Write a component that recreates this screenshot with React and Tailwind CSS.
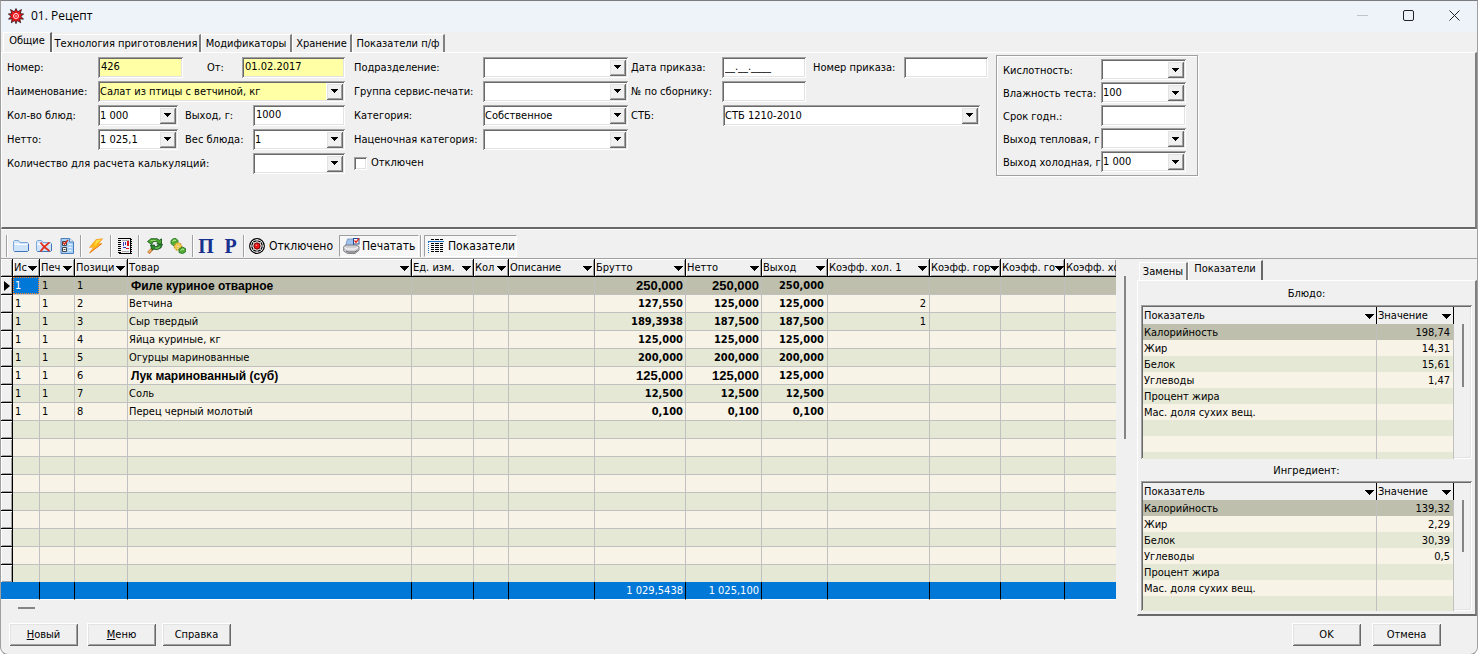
import React, { useState } from 'react';

const MAIN_TABS = [
  { name: 'Общие', width: 'w-[49px]' },
  { name: 'Технология приготовления', width: 'w-[149px]' },
  { name: 'Модификаторы', width: 'w-[91px]' },
  { name: 'Хранение', width: 'w-[60px]' },
  { name: 'Показатели п/ф', width: 'w-[93px]' },
];

const SIDE_TABS = [
  { name: 'Замены', width: 'w-[49px]' },
  { name: 'Показатели', width: 'w-[75px]' },
];

const COLUMNS = [
  { title: '', width: 'w-[12px]' },
  { title: 'Ис', width: 'w-[27px]' },
  { title: 'Печ', width: 'w-[35px]' },
  { title: 'Позици', width: 'w-[53px]' },
  { title: 'Товар', width: '' },
  { title: 'Ед. изм.', width: 'w-[62px]' },
  { title: 'Кол', width: 'w-[35px]' },
  { title: 'Описание', width: 'w-[86px]' },
  { title: 'Брутто', width: 'w-[91px]' },
  { title: 'Нетто', width: 'w-[76px]' },
  { title: 'Выход', width: 'w-[66px]' },
  { title: 'Коэфф. хол. 1', width: 'w-[102px]' },
  { title: 'Коэфф. гор', width: 'w-[71px]' },
  { title: 'Коэфф. го', width: 'w-[64px]' },
  { title: 'Коэфф. хо', width: 'w-[51px]', noArrow: true },
];

const ITEMS = [
  { name: 'Филе куриное отварное', gross: '250,000', net: '250,000', out: '250,000', strong: true },
  { name: 'Ветчина', gross: '127,550', net: '125,000', out: '125,000', cold: '2' },
  { name: 'Сыр твердый', gross: '189,3938', net: '187,500', out: '187,500', cold: '1' },
  { name: 'Яйца куриные, кг', gross: '125,000', net: '125,000', out: '125,000' },
  { name: 'Огурцы маринованные', gross: '200,000', net: '200,000', out: '200,000' },
  { name: 'Лук маринованный (суб)', gross: '125,000', net: '125,000', out: '125,000', strong: true },
  { name: 'Соль', gross: '12,500', net: '12,500', out: '12,500' },
  { name: 'Перец черный молотый', gross: '0,100', net: '0,100', out: '0,100' },
];

const ROW_COUNT = 17;

const DISH = [
  ['Калорийность', '198,74'],
  ['Жир', '14,31'],
  ['Белок', '15,61'],
  ['Углеводы', '1,47'],
  ['Процент жира', ''],
  ['Мас. доля сухих вещ.', ''],
  ['', ''],
  ['', ''],
  ['', ''],
];

const INGREDIENT = [
  ['Калорийность', '139,32'],
  ['Жир', '2,29'],
  ['Белок', '30,39'],
  ['Углеводы', '0,5'],
  ['Процент жира', ''],
  ['Мас. доля сухих вещ.', ''],
  ['', ''],
];

const SUNKEN = 'shadow-[inset_1px_1px_0_#a0a0a0,inset_-1px_-1px_0_#ffffff,inset_2px_2px_0_#696969,inset_-2px_-2px_0_#e3e3e3]';
const RAISED = 'shadow-[inset_1px_1px_0_#ffffff,inset_-1px_-1px_0_#696969,inset_2px_2px_0_#e3e3e3,inset_-2px_-2px_0_#a0a0a0]';

const Arrow = () => (
  <svg className="shrink-0" width="9" height="5" viewBox="0 0 9 5" shapeRendering="crispEdges">
    <path d="M0 0h9L4.5 5z" fill="#000" />
  </svg>
);

const TextBox = ({ id, value = '', width, yellow }) => (
  <input
    id={id}
    type="text"
    defaultValue={value}
    className={`h-[21px] shrink-0 px-[3px] pb-px outline-none ${width} ${SUNKEN} ${yellow ? 'bg-[#ffffa6]' : 'bg-white'}`}
  />
);

const Combo = ({ id, value = '', width, yellow }) => (
  <div className={`relative h-[21px] shrink-0 ${width} ${SUNKEN} ${yellow ? 'bg-[#ffffa6]' : 'bg-white'}`}>
    <select id={id} defaultValue={value} className="h-full w-full appearance-none bg-transparent pl-[2px] pr-5 pt-px outline-none">
      <option value={value}>{value}</option>
    </select>
    <span className={`pointer-events-none absolute right-[2px] top-[2px] flex h-[17px] w-[17px] items-center justify-center bg-[#f0f0f0] ${RAISED}`}>
      <svg width="7" height="4" viewBox="0 0 7 4" shapeRendering="crispEdges">
        <path d="M0 0h7L3.5 4z" fill="#000" />
      </svg>
    </span>
  </div>
);

const Label = ({ htmlFor, width, children }) => (
  <label htmlFor={htmlFor} className={`shrink-0 whitespace-nowrap pt-[2px] ${width}`}>
    {children}
  </label>
);

const Row = ({ children }) => <div className="flex h-6 items-center">{children}</div>;

const Tabs = ({ tabs, active, onSelect }) => (
  <div role="tablist" className="flex h-5 items-end">
    {tabs.map((tab) => (
      <button
        key={tab.name}
        role="tab"
        aria-selected={tab.name === active}
        onClick={() => onSelect(tab.name)}
        className={`shrink-0 whitespace-nowrap border-l border-t border-l-white border-t-white text-center ${tab.width} ${
          tab.name === active
            ? 'h-5 border-r-2 border-r-[#696969] pb-[3px]'
            : 'h-[18px] border-r-2 border-r-[#808080]'
        }`}
      >
        {tab.name}
      </button>
    ))}
  </div>
);

const AppIcon = () => (
  <svg width="16" height="16" viewBox="0 0 16 16">
    <path d="M8 .5l1.700 3.300L13.500 1.500l-1.300 4L15.700 6l-2.900 2.200 2.700 3-3.700-.4.900 4-3.600-2.300L8 15.700l-1.300-3.200-3.400 2.300.8-4-3.600.4 2.700-3L.3 6l3.500-.5-1.300-4 3.800 2.300z" fill="#f0151b" stroke="#111" strokeWidth=".7" />
    <circle cx="8" cy="8" r="2.500" fill="none" stroke="#fff" strokeWidth=".9" />
    <circle cx="8" cy="8" r=".8" fill="#fff" />
  </svg>
);

const FolderIcon = ({ crossed }) => (
  <svg width="16" height="16" viewBox="0 0 16 16">
    <path d="M.5 12.500v-9l1-1h4l1.500 2h7.500l1 1v7l-1 1h-13z" fill="#cfe3fa" stroke="#7ba7dc" />
    <path d="M1.500 6.500h13" stroke="#fff" />
    <path d="M1.500 5.500h5" stroke="#eaf4ff" />
    <path d="M1.500 13.500h13M15.500 6v7" stroke="#3f76bb" fill="none" />
    {crossed && (
      <>
        <path d="M4.500 4.500c2 3 5 6 9 8.500M13.500 4.500c-4 2.500-6.500 5-9 9" fill="none" stroke="#e0301e" strokeWidth="1.800" />
      </>
    )}
  </svg>
);

const ChecklistIcon = () => (
  <svg width="16" height="16" viewBox="0 0 16 16">
    <path d="M2 .5h8.500L14.500 4v11.500H2z" fill="#a9d0f6" stroke="#4a7fbf" />
    <path d="M10.500.5V4h4" fill="#e9f4ff" stroke="#4a7fbf" />
    <path d="M3.500 3.500h4v4h-4zM3.500 9.500h4v4h-4z" fill="#fff" stroke="#444" />
    <path d="M4 4.500l1.500 1.500L9 2" fill="none" stroke="#d8301f" strokeWidth="1.600" />
    <path d="M4.500 11.500h2" stroke="#444" />
    <path d="M9.500 6.500h3M9.500 9.500h3M9.500 12.500h3" stroke="#eef7ff" />
  </svg>
);

const LightningIcon = () => (
  <svg width="16" height="16" viewBox="0 0 16 16">
    <path d="M8 1.500L14.500.8l-4 5 3.500-.3L1.500 15l4.300-6-4.300.5z" fill="#ffb914" stroke="#f59a2e" strokeWidth=".7" />
    <path d="M8.500 2.300l4.500-.5L6 8z" fill="#ffe04a" />
    <path d="M13.500 5.800L2 14.700" stroke="#ea6f1a" strokeWidth=".9" />
  </svg>
);

const NotebookIcon = () => (
  <svg width="16" height="16" viewBox="0 0 16 16" shapeRendering="crispEdges">
    <rect x="3" y="1" width="10" height="13" fill="#f4f4f8" />
    <path d="M2 .5h12M2 15.500h12" stroke="#000" />
    <path d="M2.500 0v16" stroke="#000" strokeWidth="3" strokeDasharray="1 1" />
    <path d="M13.500 0v16" stroke="#000" strokeWidth="1" />
    <path d="M14.500 1v15" stroke="#000" strokeDasharray="1 1" />
    <path d="M6 4h1v4H6zM6 9h3v1H6zM8 4h1v3H8z" fill="#3a3ab0" />
    <path d="M10 3h2v5h-2zM9 10h3v1H9z" fill="#e01818" />
    <path d="M5 13.500h7M5 2.500h7" stroke="#aaa" />
  </svg>
);

const RefreshToolIcon = () => (
  <svg width="16" height="16" viewBox="0 0 16 16">
    <path d="M7 9l-5.700 6" stroke="#b8651c" strokeWidth="3" />
    <path d="M6.500 9.500L1.500 14.500" stroke="#ffc37a" strokeWidth="1.200" />
    <path d="M.5 3.500L4 .7h6l2.500 1.500L14.500.8v5l-4.700.2 1.200-1.500-1.800-1H6.500L4.500 6.500z" fill="#49a82c" stroke="#124a18" strokeWidth=".8" />
    <path d="M3.500 7h4.300L7 8l2 .8 2.500-2.300 4-.2-1.500 3.500-3.500 1.800-4-.4-1.500.8z" fill="#2b8a2a" stroke="#124a18" strokeWidth=".8" />
    <path d="M3.500 2.500h5.500M8 10h3l2-1.500" fill="none" stroke="#a5e27d" strokeWidth=".8" />
  </svg>
);

const GearsIcon = () => (
  <svg width="16" height="16" viewBox="0 0 16 16">
    <path d="M1 2.500L3.500.5H6l2 2v3L6 8 3 7.500 1 5.500z" fill="#52ad35" stroke="#256d22" strokeWidth=".8" />
    <path d="M2.500 4l1.500-2 2 .5" fill="none" stroke="#bff09a" />
    <circle cx="8" cy="8.500" r="3.600" fill="#f6d257" stroke="#c99a26" strokeWidth="1.400" strokeDasharray="2 1" />
    <circle cx="8" cy="8.500" r="1.200" fill="#fff7d0" stroke="#c99a26" strokeWidth=".6" />
    <path d="M9 11l3.500-2 3 1.500V14l-3 1.700L9 14.500z" fill="#52ad35" stroke="#256d22" strokeWidth=".8" />
    <path d="M10.500 12.500l2-1.500 1.500.7" fill="none" stroke="#bff09a" />
  </svg>
);

const TargetIcon = () => (
  <svg width="16" height="16" viewBox="0 0 16 16">
    <circle cx="8" cy="8" r="7.300" fill="#fff" stroke="#000" strokeWidth="1.300" />
    <circle cx="8" cy="8" r="5.200" fill="none" stroke="#000" strokeWidth="1.300" />
    <circle cx="8" cy="8" r="3.200" fill="#f01414" stroke="#500" strokeWidth=".9" />
    <path d="M8 1v3M8 12v3M1 8h3M12 8h3M3 3l2 2M13 3l-2 2M3 13l2-2M13 13l-2-2" stroke="#fff" strokeWidth=".7" />
    <circle cx="7.300" cy="7.300" r=".8" fill="#ff9a9a" />
  </svg>
);

const PrinterIcon = () => (
  <svg width="17" height="16" viewBox="0 0 17 16">
    <path d="M4.500 1h7l-1 7h-8z" fill="#9fc2f0" stroke="#6f8fbc" strokeWidth=".8" />
    <path d="M.7 8.500L3 7h9.500l3.500 1.500v3.700L12 15.500H4.500L.7 13z" fill="#cfcfd3" stroke="#6c6c72" strokeWidth=".8" />
    <path d="M1.500 9.500L4.500 11h7.500l3-2" fill="none" stroke="#fff" />
    <path d="M3 13l2 1h7l2.500-1.800" stroke="#5c5c62" fill="none" />
    <rect x="10.500" y=".5" width="5.500" height="5.500" fill="#fff" stroke="#27488c" />
    <path d="M11.500 2.500L13 4.500 16 .5" fill="none" stroke="#e02a1a" strokeWidth="1.300" />
  </svg>
);

const ListIcon = () => (
  <svg width="16" height="15" viewBox="0 0 16 15" shapeRendering="crispEdges">
    <path d="M0 3.500h16" stroke="#1d6fc4" />
    <path d="M.5 4v11" stroke="#1d6fc4" strokeDasharray="1 1" />
    <path d="M3 1.500h3M7 1.500h4M12 1.500h3M3 5.500h3M7 5.500h4M12 5.500h3M3 7.500h3M7 7.500h4M12 7.500h3M3 9.500h3M7 9.500h4M12 9.500h3M3 11.500h3M7 11.500h4M12 11.500h3M3 13.500h3M7 13.500h4M12 13.500h3" stroke="#000" />
  </svg>
);

const Separator = () => <span className="h-[22px] w-[2px] shrink-0 border-l border-r border-l-[#a0a0a0] border-r-white" />;

const ToolButton = ({ label, width = 'w-[23px]', children }) => (
  <button aria-label={label} className={`flex h-[22px] shrink-0 items-center justify-center ${width}`}>
    {children}
  </button>
);

const Toolbar = () => (
  <div className="flex h-[30px] items-center border-b border-t border-b-[#a0a0a0] border-t-white pl-[5px] pt-[3px] text-[12px]">
    <Separator />
    <span className="w-px" />
    <ToolButton label="Открыть"><FolderIcon /></ToolButton>
    <ToolButton label="Удалить"><FolderIcon crossed /></ToolButton>
    <ToolButton label="Список"><ChecklistIcon /></ToolButton>
    <span className="w-[2px]" />
    <Separator />
    <ToolButton label="Пересчитать" width="w-[28px]"><LightningIcon /></ToolButton>
    <Separator />
    <ToolButton label="Журнал" width="w-[26px]"><NotebookIcon /></ToolButton>
    <Separator />
    <span className="w-[3px]" />
    <ToolButton label="Обновить"><RefreshToolIcon /></ToolButton>
    <ToolButton label="Настройки"><GearsIcon /></ToolButton>
    <span className="w-[3px]" />
    <Separator />
    <ToolButton label="Приход" width="w-[24px]">
      <span className="font-['Liberation_Serif',serif] text-[20px] font-bold leading-5 text-[#17318f]">П</span>
    </ToolButton>
    <ToolButton label="Расход" width="w-[25px]">
      <span className="font-['Liberation_Serif',serif] text-[20px] font-bold leading-5 text-[#17318f]">Р</span>
    </ToolButton>
    <Separator />
    <button className="flex h-[22px] w-[94px] shrink-0 items-center gap-1 whitespace-nowrap pl-1">
      <TargetIcon />
      Отключено
    </button>
    <button className="flex h-[22px] w-[80px] shrink-0 items-center gap-[2px] whitespace-nowrap border border-b-white border-l-[#a0a0a0] border-r-white border-t-[#a0a0a0] bg-[#f7f7f7] pl-[3px]">
      <PrinterIcon />
      Печатать
    </button>
    <span className="w-[1px]" />
    <Separator />
    <span className="w-[2px]" />
    <button className="flex h-[22px] w-[93px] shrink-0 items-center gap-1 whitespace-nowrap border border-b-white border-l-[#a0a0a0] border-r-white border-t-[#a0a0a0] bg-[#f7f7f7] pl-[3px]">
      <ListIcon />
      Показатели
    </button>
  </div>
);

const ItemsTable = () => (
  <table className="w-full table-fixed border-separate border-spacing-0">
    <colgroup>
      {COLUMNS.map((col, i) => (
        <col key={i} className={col.width} />
      ))}
    </colgroup>
    <thead>
      <tr>
        {COLUMNS.map((col, i) => (
          <th
            key={i}
            className="h-[18px] overflow-hidden border-b border-r border-black bg-[#f0f0f0] p-0 text-left font-normal shadow-[inset_1px_1px_0_#ffffff,inset_-1px_-1px_0_#a0a0a0] last:border-r-0"
          >
            {col.title && (
              <div className="flex h-[17px] items-center justify-between pl-px pr-[2px] pt-px">
                <span className="whitespace-nowrap">{col.title}</span>
                {!col.noArrow && <Arrow />}
              </div>
            )}
          </th>
        ))}
      </tr>
    </thead>
    <tbody>
      {Array.from({ length: ROW_COUNT }, (_, i) => {
        const item = ITEMS[i] || {};
        const last = i === ROW_COUNT - 1;
        const bg = i === 0 ? 'bg-[#bfbfad]' : i % 2 ? 'bg-[#f7f3e7]' : 'bg-[#e6e8d6]';
        const cell = `overflow-hidden whitespace-nowrap border-r border-[#c0c0c0] p-0 pt-px leading-4 ${bg} ${last ? 'h-[17px]' : 'h-[18px] border-b'}`;
        const strong = item.strong ? "font-['Liberation_Sans',sans-serif] text-[13px]" : '';
        return (
          <tr key={i}>
            <td className={`border-r border-black bg-[#f0f0f0] p-0 shadow-[inset_1px_1px_0_#ffffff,inset_-1px_-1px_0_#a0a0a0] ${last ? '' : 'border-b'}`}>
              {i === 0 && (
                <svg className="ml-[3px]" width="6" height="10" viewBox="0 0 6 10">
                  <path d="M0 0l6 5-6 5z" fill="#000" />
                </svg>
              )}
            </td>
            {i === 0 ? (
              <td className="border-b border-r border-[#c0c0c0] bg-[#bfbfad] p-0">
                <div className="h-[17px] border border-dotted border-[#ff8728] bg-[#0078d7] pl-px leading-4 text-white">1</div>
              </td>
            ) : (
              <td className={`${cell} pl-[2px]`}>{item.name && '1'}</td>
            )}
            <td className={`${cell} pl-[2px]`}>{item.name && '1'}</td>
            <td className={`${cell} pl-[2px]`}>{item.name && i + 1}</td>
            <td className={`${cell} ${item.strong ? "pl-[3px] font-['Liberation_Sans',sans-serif] text-[12px] font-bold" : 'pl-px'}`}>
              {item.name}
            </td>
            <td className={cell} />
            <td className={cell} />
            <td className={cell} />
            <td className={`${cell} pr-[2px] text-right font-bold ${strong}`}>{item.gross}</td>
            <td className={`${cell} pr-[2px] text-right font-bold ${strong}`}>{item.net}</td>
            <td className={`${cell} pr-[3px] text-right font-bold`}>{item.out}</td>
            <td className={`${cell} pr-[3px] text-right`}>{item.cold}</td>
            <td className={cell} />
            <td className={cell} />
            <td className={`${cell} border-r-0`} />
          </tr>
        );
      })}
    </tbody>
    <tfoot>
      <tr className="bg-[#0078d7] text-white">
        {COLUMNS.map((col, i) => (
          <td
            key={i}
            className={`h-[18px] whitespace-nowrap border-b border-b-white p-0 pr-[2px] pt-px text-right leading-4 last:border-r-0 ${i === 0 ? '' : 'border-r border-r-black'}`}
          >
            {col.title === 'Брутто' && '1 029,5438'}
            {col.title === 'Нетто' && '1 025,100'}
          </td>
        ))}
      </tr>
    </tfoot>
  </table>
);

const ValuesGrid = ({ rows, height, thumb }) => (
  <div className={`flex overflow-hidden p-[2px] ${SUNKEN} ${height}`}>
    <table className="w-full flex-1 table-fixed self-start border-separate border-spacing-0">
      <colgroup>
        <col />
        <col className="w-[77px]" />
      </colgroup>
      <thead>
        <tr>
          {['Показатель', 'Значение'].map((title) => (
            <th key={title} className="h-[17px] border-r border-black bg-[#f0f0f0] p-0 text-left font-normal">
              <div className="flex items-center justify-between pl-px pr-[2px] pt-px leading-4">
                {title}
                <Arrow />
              </div>
            </th>
          ))}
        </tr>
      </thead>
      <tbody>
        {rows.map(([name, value], i) => {
          const bg = i === 0 ? 'bg-[#bfbfad]' : i % 2 ? 'bg-[#f7f3e7]' : 'bg-[#e6e8d6]';
          return (
            <tr key={i} className={bg}>
              <td className="h-4 border-r border-[#c0c0c0] p-0 pl-px pt-[2px] leading-[14px]">{name}</td>
              <td className="h-4 border-r border-[#c0c0c0] p-0 pr-[3px] pt-[2px] text-right leading-[14px]">{value}</td>
            </tr>
          );
        })}
      </tbody>
    </table>
    <div className="w-[16px] shrink-0 pl-[8px] pt-[17px]">
      <div className={`w-[2px] bg-[#858585] ${thumb}`} />
    </div>
  </div>
);

const PushButton = ({ children }) => (
  <button className={`h-[23px] w-[69px] bg-[#f0f0f0] ${RAISED}`}>{children}</button>
);

const App = () => {
  const [mainTab, setMainTab] = useState('Общие');
  const [sideTab, setSideTab] = useState('Показатели');

  return (
    <div className="flex min-h-screen w-full flex-col overflow-hidden rounded-b-lg border border-b-[#8a8a8a] border-l-[#a0a0a0] border-r-[#a0a0a0] border-t-[#7d7d80] bg-[#f0f0f0] font-['DejaVu_Sans_Condensed','DejaVu_Sans',sans-serif] text-[11px] leading-[14px] text-black">
      {/* Title bar */}
      <header className="flex h-[31px] shrink-0 items-center bg-[#eef3fa] pb-[2px] pl-[7px]">
        <AppIcon />
        <h1 className="flex-1 pl-[7px] font-['Open_Sans',sans-serif] text-[12px]">01. Рецепт</h1>
        <button aria-label="Свернуть" className="flex h-full w-[46px] items-center justify-center">
          <span className="h-px w-[11px] bg-[#c0c4ca]" />
        </button>
        <button aria-label="Развернуть" className="flex h-full w-[46px] items-center justify-center">
          <span className="h-[11px] w-[11px] rounded-[2px] border border-[#222]" />
        </button>
        <button aria-label="Закрыть" className="flex h-full w-[46px] items-center justify-center">
          <svg width="11" height="11" viewBox="0 0 11 11">
            <path d="M.5.5l10 10M10.500.5l-10 10" stroke="#222" />
          </svg>
        </button>
      </header>

      {/* Recipe form */}
      <div className="pl-[2px]">
        <Tabs tabs={MAIN_TABS} active={mainTab} onSelect={setMainTab} />
      </div>
      <form className="flex h-[177px] items-start border-b-2 border-l border-r-2 border-t border-b-[#696969] border-l-white border-r-[#808080] border-t-white pl-[5px] pt-[2px]">
        <div className="w-[347px] shrink-0">
          <Row>
            <Label htmlFor="number" width="w-[91px]">Номер:</Label>
            <TextBox id="number" value="426" width="w-[85px]" yellow />
            <span className="w-[24px]" />
            <Label htmlFor="from" width="w-[35px]">От:</Label>
            <TextBox id="from" value="01.02.2017" width="w-[103px]" yellow />
          </Row>
          <Row>
            <Label htmlFor="name" width="w-[91px]">Наименование:</Label>
            <Combo id="name" value="Салат из птицы с ветчиной, кг" width="w-[247px]" yellow />
          </Row>
          <Row>
            <Label htmlFor="count" width="w-[91px]">Кол-во блюд:</Label>
            <Combo id="count" value="1 000" width="w-[80px]" />
            <span className="w-[7px]" />
            <Label htmlFor="output" width="w-[68px]">Выход, г:</Label>
            <TextBox id="output" value="1000" width="w-[92px]" />
          </Row>
          <Row>
            <Label htmlFor="net" width="w-[91px]">Нетто:</Label>
            <Combo id="net" value="1 025,1" width="w-[80px]" />
            <span className="w-[7px]" />
            <Label htmlFor="weight" width="w-[68px]">Вес блюда:</Label>
            <Combo id="weight" value="1" width="w-[92px]" />
          </Row>
          <Row>
            <Label htmlFor="calc" width="w-[246px]">Количество для расчета калькуляций:</Label>
            <Combo id="calc" width="w-[92px]" />
          </Row>
        </div>

        <div className="w-[277px] shrink-0">
          <Row>
            <Label htmlFor="dept" width="w-[129px]">Подразделение:</Label>
            <Combo id="dept" width="w-[145px]" />
          </Row>
          <Row>
            <Label htmlFor="group" width="w-[129px]">Группа сервис-печати:</Label>
            <Combo id="group" width="w-[145px]" />
          </Row>
          <Row>
            <Label htmlFor="category" width="w-[129px]">Категория:</Label>
            <Combo id="category" value="Собственное" width="w-[145px]" />
          </Row>
          <Row>
            <Label htmlFor="markup" width="w-[129px]">Наценочная категория:</Label>
            <Combo id="markup" width="w-[145px]" />
          </Row>
          <Row>
            <input id="disabled" type="checkbox" className={`h-[13px] w-[13px] appearance-none bg-white ${SUNKEN}`} />
            <label htmlFor="disabled" className="pl-1">Отключен</label>
          </Row>
        </div>

        <div className="w-[365px] shrink-0">
          <Row>
            <Label htmlFor="orderDate" width="w-[91px]">Дата приказа:</Label>
            <TextBox id="orderDate" value="__.__.____" width="w-[84px]" />
            <span className="w-[7px]" />
            <Label htmlFor="orderNumber" width="w-[91px]">Номер приказа:</Label>
            <TextBox id="orderNumber" width="w-[84px]" />
          </Row>
          <Row>
            <Label htmlFor="bookNumber" width="w-[91px]">№ по сборнику:</Label>
            <TextBox id="bookNumber" width="w-[84px]" />
          </Row>
          <Row>
            <Label htmlFor="stb" width="w-[92px]">СТБ:</Label>
            <Combo id="stb" value="СТБ 1210-2010" width="w-[257px]" />
          </Row>
        </div>

        <fieldset className="w-[202px] shrink-0 border border-[#a0a0a0] py-[2px] pl-[6px] shadow-[inset_1px_1px_0_#ffffff,1px_1px_0_#ffffff]">
          <div className="flex h-[23px] items-center">
            <Label htmlFor="acid" width="w-[98px]">Кислотность:</Label>
            <Combo id="acid" width="w-[85px]" />
          </div>
          <div className="flex h-[23px] items-center">
            <Label htmlFor="moisture" width="w-[98px]">Влажность теста:</Label>
            <Combo id="moisture" value="100" width="w-[85px]" />
          </div>
          <div className="flex h-[23px] items-center">
            <Label htmlFor="shelf" width="w-[98px]">Срок годн.:</Label>
            <TextBox id="shelf" width="w-[85px]" />
          </div>
          <div className="flex h-[23px] items-center">
            <Label htmlFor="hot" width="w-[98px]">Выход тепловая, г</Label>
            <Combo id="hot" width="w-[85px]" />
          </div>
          <div className="flex h-[23px] items-center">
            <Label htmlFor="cold" width="w-[98px]">Выход холодная, г</Label>
            <Combo id="cold" value="1 000" width="w-[85px]" />
          </div>
        </fieldset>
      </form>

      <Toolbar />

      <main className="flex">
        <section className="min-w-0 flex-1">
          <ItemsTable />
          <div className="ml-[17px] mt-[7px] h-[2px] w-[17px] bg-[#858585]" />
        </section>
        <div className="w-[21px] shrink-0 pl-[8px] pt-[17px]">
          <div className="h-[163px] w-[2px] bg-[#858585]" />
        </div>

        {/* Nutrition values */}
        <aside className="flex w-[340px] shrink-0 flex-col">
          <div className="pl-[2px] pt-px">
            <Tabs tabs={SIDE_TABS} active={sideTab} onSelect={setSideTab} />
          </div>
          <div className="flex flex-1 flex-col border-b-2 border-l border-r-2 border-t border-b-[#696969] border-l-white border-r-[#808080] border-t-white pb-[3px] pl-[3px] pr-[3px]">
            <h2 className="pb-[4px] pt-[6px] text-center">Блюдо:</h2>
            <ValuesGrid rows={DISH} height="h-[154px]" thumb="h-[63px]" />
            <h2 className="pb-[3px] pt-[5px] text-center">Ингредиент:</h2>
            <ValuesGrid rows={INGREDIENT} height="h-[130px]" thumb="h-[52px]" />
          </div>
        </aside>
      </main>

      <footer className="flex items-center pb-2 pl-2 pr-[36px] pt-[7px]">
        <PushButton><u>Н</u>овый</PushButton>
        <span className="w-[9px]" />
        <PushButton><u>М</u>еню</PushButton>
        <span className="w-[6px]" />
        <PushButton>Справка</PushButton>
        <span className="flex-1" />
        <PushButton>OK</PushButton>
        <span className="w-[11px]" />
        <PushButton>Отмена</PushButton>
      </footer>
    </div>
  );
};

export default App;
